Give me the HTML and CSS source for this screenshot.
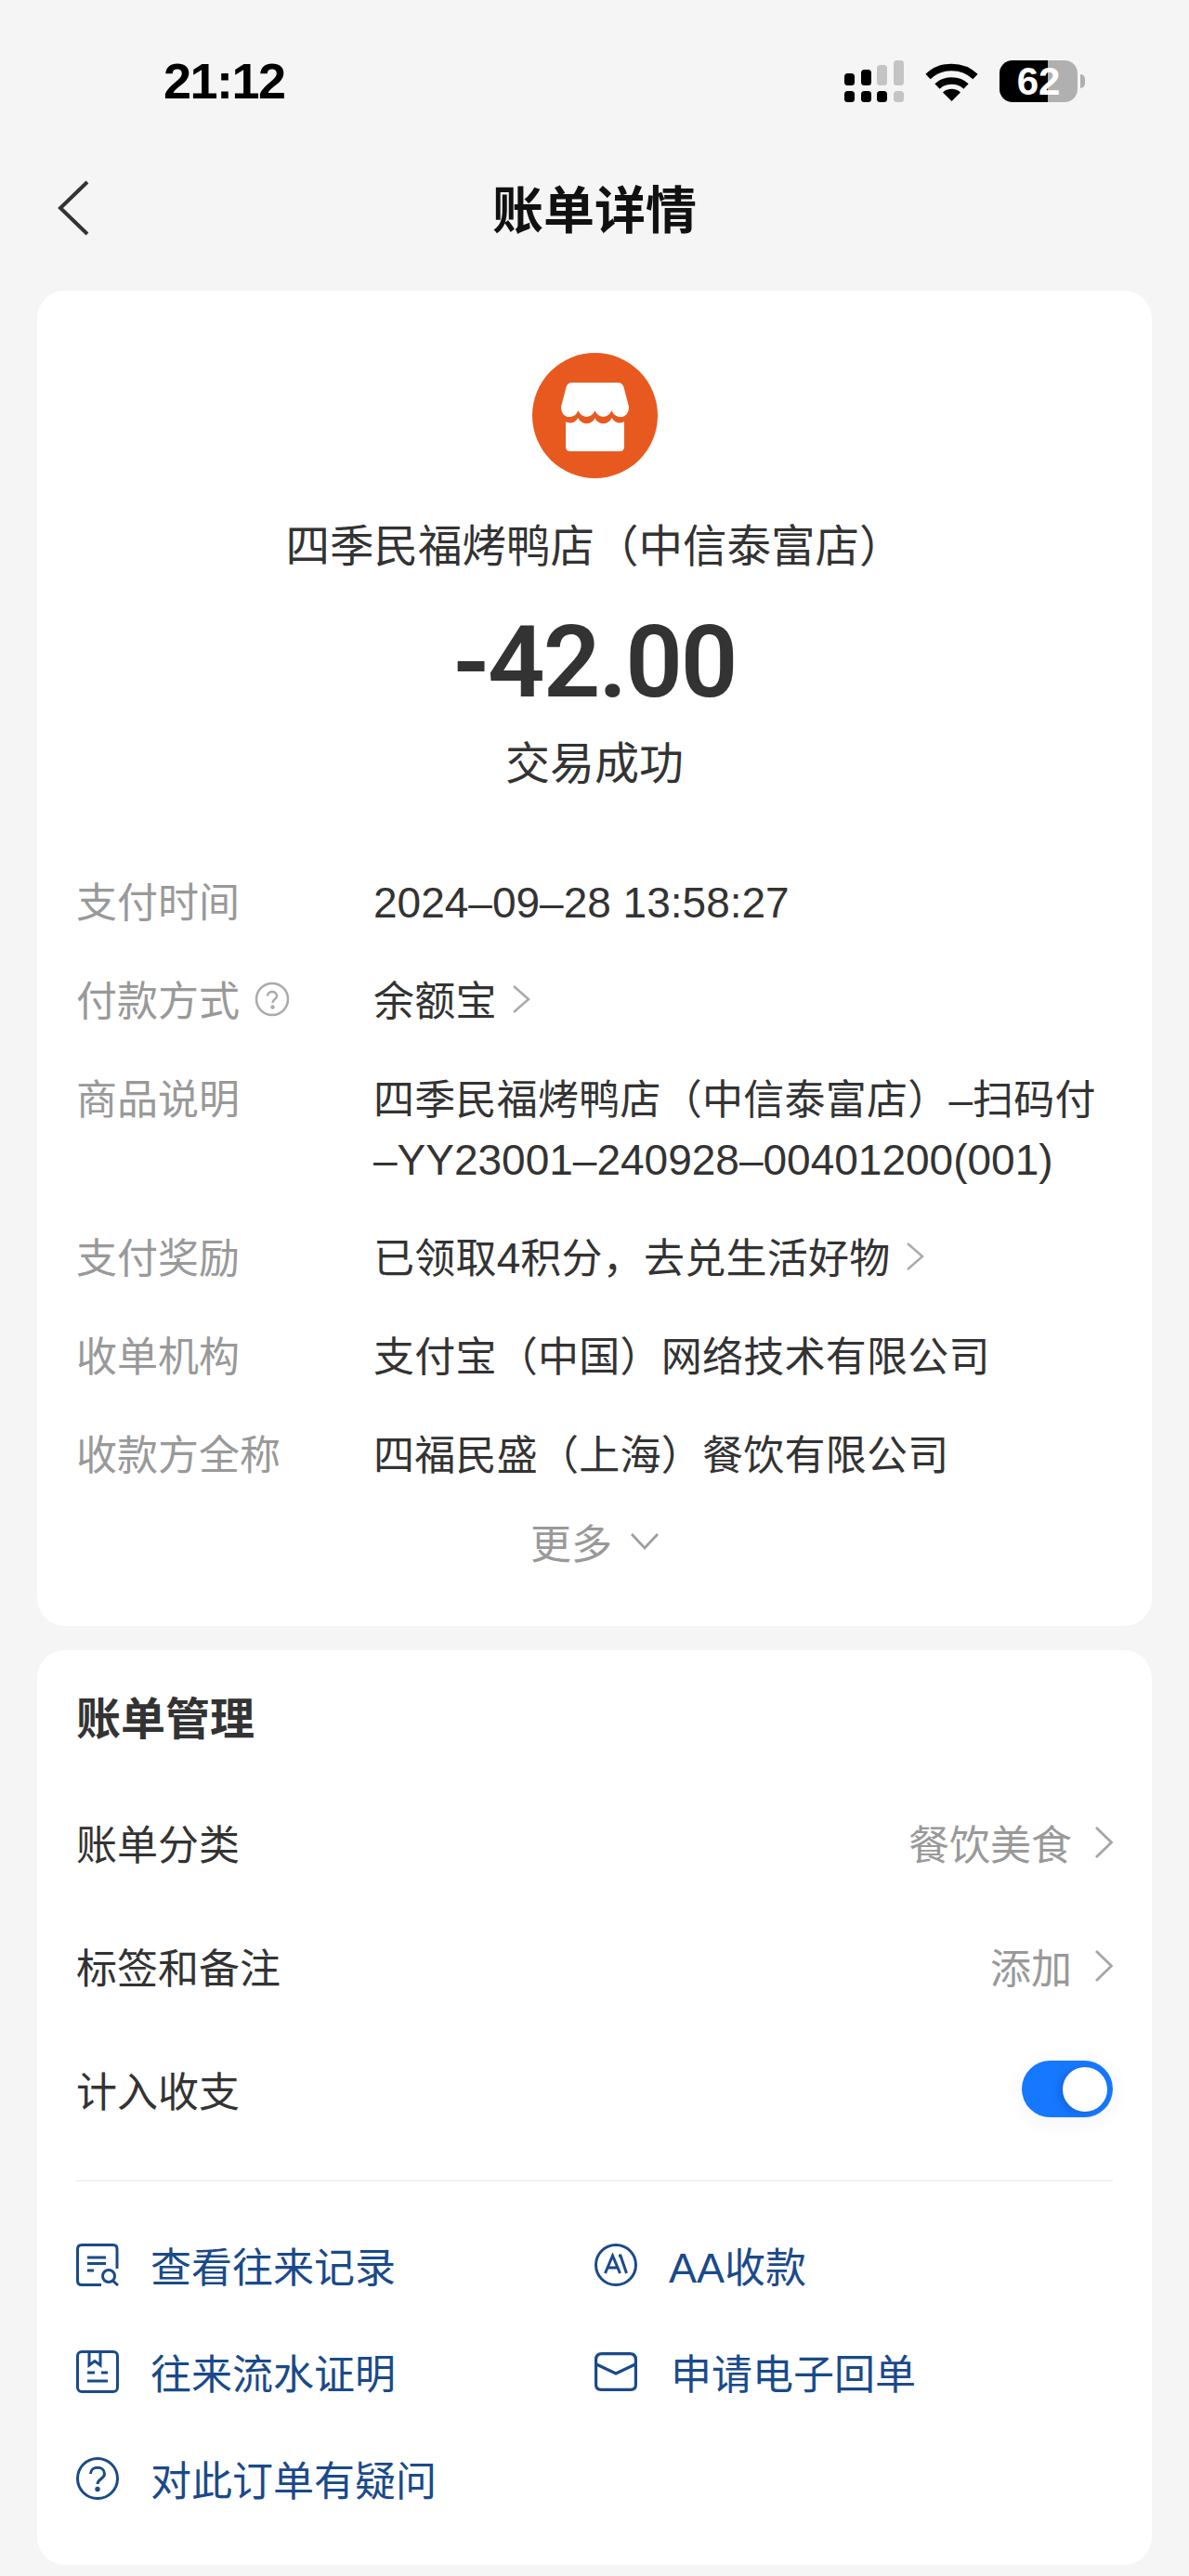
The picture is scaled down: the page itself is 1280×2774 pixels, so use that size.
FILE: index.html
```html
<!DOCTYPE html>
<html lang="zh-CN">
<head>
<meta charset="utf-8">
<title>账单详情</title>
<link rel="stylesheet" href="styles.css">
</head>
<body>
<header class="status">
  <span class="time">21:12</span>
  <div class="status-icons">
    <svg class="signal" width="64" height="45" viewBox="0 0 64 45">
      <rect x="0" y="14" width="11" height="13" rx="3.5" fill="#000"/>
      <rect x="18" y="10" width="11" height="17" rx="3.5" fill="#000"/>
      <rect x="35" y="5" width="11" height="22" rx="3.5" fill="#c4c4c4"/>
      <rect x="53" y="0" width="11" height="27" rx="3.5" fill="#c4c4c4"/>
      <rect x="0" y="33" width="11" height="12" rx="3.5" fill="#000"/>
      <rect x="18" y="33" width="11" height="12" rx="3.5" fill="#000"/>
      <rect x="35" y="33" width="11" height="12" rx="3.5" fill="#000"/>
      <rect x="53" y="33" width="11" height="12" rx="3.5" fill="#c4c4c4"/>
    </svg>
    <svg class="wifi" width="57" height="43" viewBox="0 0 57 43" fill="none" stroke="#000" stroke-width="7.5">
      <path d="M3 16.5C17 3 40 3 54 16.5"/>
      <path d="M13 27C21 19 36 19 44 27"/>
      <path d="M28.500 43L19 33.500C24 28.500 33 28.500 38 33.500Z" fill="#000" stroke="none"/>
    </svg>
    <div class="battery"><span class="battery-num">62</span></div>
    <span class="battery-nub"></span>
  </div>
</header>

<nav class="nav">
  <svg class="back" width="34" height="60" viewBox="0 0 34 60" fill="none" stroke="#333" stroke-width="4"><path d="M32 2L3 30L32 58"/></svg>
  <h1 class="nav-title">账单详情</h1>
</nav>

<main class="page">
  <section class="card summary">
    <div class="merchant-logo">
      <svg width="135" height="135" viewBox="0 0 135 135">
        <circle cx="67.500" cy="67.500" r="67.500" fill="#e8591f"/>
        <path fill="#fff" d="M43 32H92Q97 32 98.500 37L104 58C104 72 89 72 85.500 62C82 71 71 71 67.500 62C64 71 53 71 49.500 62C46 72 31 72 31 58L36.500 37Q38 32 43 32Z"/>
        <path fill="#fff" d="M36 74C42 77 46 75 49.500 70C53 78 64 78 67.500 70C71 78 82 78 85.500 70C89 75 93 77 99 74V101Q99 106 94 106H41Q36 106 36 101Z"/>
      </svg>
    </div>
    <p class="merchant">四季民福烤鸭店（中信泰富店）</p>
    <p class="amount">-42.00</p>
    <p class="result">交易成功</p>

    <dl class="details">
      <div class="row"><dt>支付时间</dt><dd><span class="latin">2024–09–28 13:58:27</span></dd></div>
      <div class="row">
        <dt class="with-icon">付款方式
          <svg class="help" width="38" height="38" viewBox="0 0 38 38" fill="none" stroke="#aaa" stroke-width="2.500"><circle cx="19" cy="19" r="17"/><path d="M14 15.500C14 9.500 24 9.500 24 15.500C24 19 19.500 19 19.500 23"/><circle cx="19.500" cy="27.500" r="1" fill="#aaa"/></svg>
        </dt>
        <dd class="with-icon">余额宝
          <svg class="chev" width="20" height="32" viewBox="0 0 20 32" fill="none" stroke="#aaa" stroke-width="2.500"><path d="M2 2L18 16L2 30"/></svg>
        </dd>
      </div>
      <div class="row"><dt>商品说明</dt><dd>四季民福烤鸭店（中信泰富店）<span class="latin">–</span>扫码付<br><span class="latin">–YY23001–240928–00401200(001)</span></dd></div>
      <div class="row">
        <dt>支付奖励</dt>
        <dd class="with-icon"><span>已领取<span class="latin">4</span>积分，去兑生活好物</span>
          <svg class="chev" width="20" height="32" viewBox="0 0 20 32" fill="none" stroke="#aaa" stroke-width="2.500"><path d="M2 2L18 16L2 30"/></svg>
        </dd>
      </div>
      <div class="row"><dt>收单机构</dt><dd>支付宝（中国）网络技术有限公司</dd></div>
      <div class="row"><dt>收款方全称</dt><dd>四福民盛（上海）餐饮有限公司</dd></div>
    </dl>
    <div class="more">更多
      <svg width="30" height="19" viewBox="0 0 30 19" fill="none" stroke="#a0a0a0" stroke-width="2.800"><path d="M1 2L15 17L29 2"/></svg>
    </div>
  </section>

  <section class="card manage">
    <h2 class="manage-title">账单管理</h2>
    <div class="setting">
      <span>账单分类</span>
      <span class="setting-value">餐饮美食
        <svg width="20" height="36" viewBox="0 0 20 36" fill="none" stroke="#a6a6a6" stroke-width="2.800"><path d="M2 2L18.500 18L2 34"/></svg>
      </span>
    </div>
    <div class="setting">
      <span>标签和备注</span>
      <span class="setting-value">添加
        <svg width="20" height="36" viewBox="0 0 20 36" fill="none" stroke="#a6a6a6" stroke-width="2.800"><path d="M2 2L18.500 18L2 34"/></svg>
      </span>
    </div>
    <div class="setting">
      <span>计入收支</span>
      <span class="toggle"><span class="knob"></span></span>
    </div>
    <div class="divider"></div>
    <div class="links">
      <a class="link">
        <svg width="46" height="46" viewBox="0 0 46 46" fill="none" stroke="#1a4a8a" stroke-width="3"><path d="M44 27V6Q44 1.500 40 1.500H6Q1.500 1.500 1.500 6V40Q1.500 44.500 6 44.500H27"/><path d="M12 15H32M12 21.500H32M12 29H19"/><circle cx="35" cy="35" r="6.500"/><path d="M39.500 40L45 45"/></svg>
        <span>查看往来记录</span>
      </a>
      <a class="link">
        <svg width="46" height="46" viewBox="0 0 46 46" fill="none" stroke="#1a4a8a" stroke-width="3"><circle cx="23" cy="23" r="21.500"/><path d="M11.500 32L19.500 13L27.500 32M14.500 26H24.500"/><path d="M26 13H28L34.500 32"/></svg>
        <span><span class="latin">AA</span>收款</span>
      </a>
      <a class="link">
        <svg width="46" height="46" viewBox="0 0 46 46" fill="none" stroke="#1a4a8a" stroke-width="3"><rect x="1.500" y="1.500" width="43" height="43" rx="4.500"/><path d="M14 2V16L20 11.500L26 16V2"/><path d="M27 24H34M12 33H34"/><path d="M12 24H20"/></svg>
        <span>往来流水证明</span>
      </a>
      <a class="link">
        <svg width="46" height="42" viewBox="0 0 46 42" fill="none" stroke="#1a4a8a" stroke-width="3.200"><path d="M8 1.600H38Q44.400 1.600 44.400 8V35Q44.400 40.400 39 40.400H7Q1.600 40.400 1.600 35V8Q1.600 1.600 8 1.600Z"/><path d="M2 13L23 23L44 13"/></svg>
        <span class="link-mail">申请电子回单</span>
      </a>
      <a class="link">
        <svg width="46" height="46" viewBox="0 0 46 46" fill="none" stroke="#1a4a8a" stroke-width="3"><circle cx="23" cy="23" r="21.500"/><path d="M15.500 18C15.500 9 30.500 9 30.500 18C30.500 23.500 23 23.500 23 29"/><circle cx="23" cy="34.500" r="1.200" fill="#1a4a8a"/></svg>
        <span>对此订单有疑问</span>
      </a>
    </div>
  </section>
</main>
</body>
</html>
```

FILE: styles.css
```css
* { box-sizing: border-box; }
html, body { margin: 0; padding: 0; }
body {
  width: 1280px;
  height: 2774px;
  background: #f5f5f5;
  color: #333;
  font-family: "Noto Sans CJK SC", "Liberation Sans", sans-serif;
  font-size: 44px;
  overflow: hidden;
}
p, h1, h2, dl, dd { margin: 0; }
.latin {
  font-family: "Liberation Sans", sans-serif;
  font-size: 46px;
  line-height: 0;
}
.link .latin { font-size: 45px; }

.status {
  height: 174px;
  display: flex;
  justify-content: space-between;
  align-items: center;
  padding: 0 112px 0 176px;
}
.time {
  font-family: "Liberation Sans", sans-serif;
  font-weight: 700;
  font-size: 54px;
  letter-spacing: -1.500px;
  color: #000;
  line-height: 60px;
}
.status-icons { display: flex; align-items: center; }
.signal { display: block; margin-right: 23px; }
.wifi { display: block; margin-right: 23px; }
.battery {
  width: 84px;
  height: 45px;
  border-radius: 14px;
  background: linear-gradient(90deg, #000 0 62%, #b0b0b0 62% 100%);
  display: flex;
  align-items: center;
  justify-content: center;
}
.battery-num {
  font-family: "Liberation Sans", sans-serif;
  font-weight: 700;
  font-size: 42px;
  line-height: 45px;
  color: #fff;
}
.battery-nub {
  width: 5px;
  height: 15px;
  margin-left: 3px;
  background: #b0b0b0;
  border-radius: 0 8px 8px 0;
}

.nav {
  height: 96px;
  margin-bottom: 43px;
  position: relative;
  display: flex;
  align-items: center;
  justify-content: center;
}
.back { position: absolute; left: 62px; top: 20px; }
.nav-title {
  font-size: 55px;
  font-weight: 700;
  color: #111;
  line-height: 60px;
}

.page {
  padding: 0 40px;
  display: flex;
  flex-direction: column;
  gap: 26px;
}
.card { background: #fff; border-radius: 30px; }

.summary { height: 1438px; padding: 67px 42px 0; }
.merchant-logo { display: flex; justify-content: center; height: 135px; }
.merchant {
  margin-top: 40px;
  text-align: center;
  font-size: 47.5px;
  line-height: 60px;
}
.amount {
  margin-top: 38px;
  text-align: center;
  font-family: "Roboto", sans-serif;
  font-weight: 600;
  font-size: 108px;
  line-height: 120px;
  letter-spacing: -2px;
}
.result {
  margin-top: 15px;
  text-align: center;
  font-size: 48px;
  line-height: 60px;
}

.details {
  margin-top: 89px;
  display: flex;
  flex-direction: column;
  gap: 41px;
}
.row {
  display: grid;
  grid-template-columns: 320px 1fr;
  line-height: 65px;
}
.row dt { color: #999; }
.row dd { letter-spacing: 0.25px; }
.row dd .latin { letter-spacing: 0; }
.with-icon { display: flex; align-items: center; gap: 16px; }

.more {
  margin-top: 30px;
  height: 65px;
  display: flex;
  align-items: center;
  justify-content: center;
  gap: 20px;
  color: #999;
}

.manage { height: 985px; padding: 40px 42px 0; }
.manage-title {
  font-size: 48px;
  font-weight: 700;
  line-height: 60px;
}
.setting {
  height: 133px;
  display: flex;
  align-items: center;
  justify-content: space-between;
}
.manage-title + .setting { margin-top: 40px; }
.setting-value {
  display: flex;
  align-items: center;
  gap: 24px;
  color: #999;
}
.toggle {
  width: 98px;
  height: 61px;
  border-radius: 31px;
  background: #1677ff;
  display: flex;
  align-items: center;
  justify-content: flex-end;
  padding-right: 6px;
  box-shadow: 0 4px 24px rgba(0, 0, 0, 0.05);
}
.knob {
  width: 48px;
  height: 48px;
  border-radius: 50%;
  background: #fff;
  box-shadow: -4px 2px 8px rgba(0, 0, 0, 0.15);
}
.divider { height: 1px; background: #e8e8e8; margin-top: 32px; }

.links {
  margin-top: 32px;
  display: grid;
  grid-template-columns: 558px 1fr;
  grid-auto-rows: 115px;
}
.link {
  display: flex;
  align-items: center;
  gap: 34px;
  color: #1a4a8a;
}
.link-mail { margin-left: 2px; }
```
